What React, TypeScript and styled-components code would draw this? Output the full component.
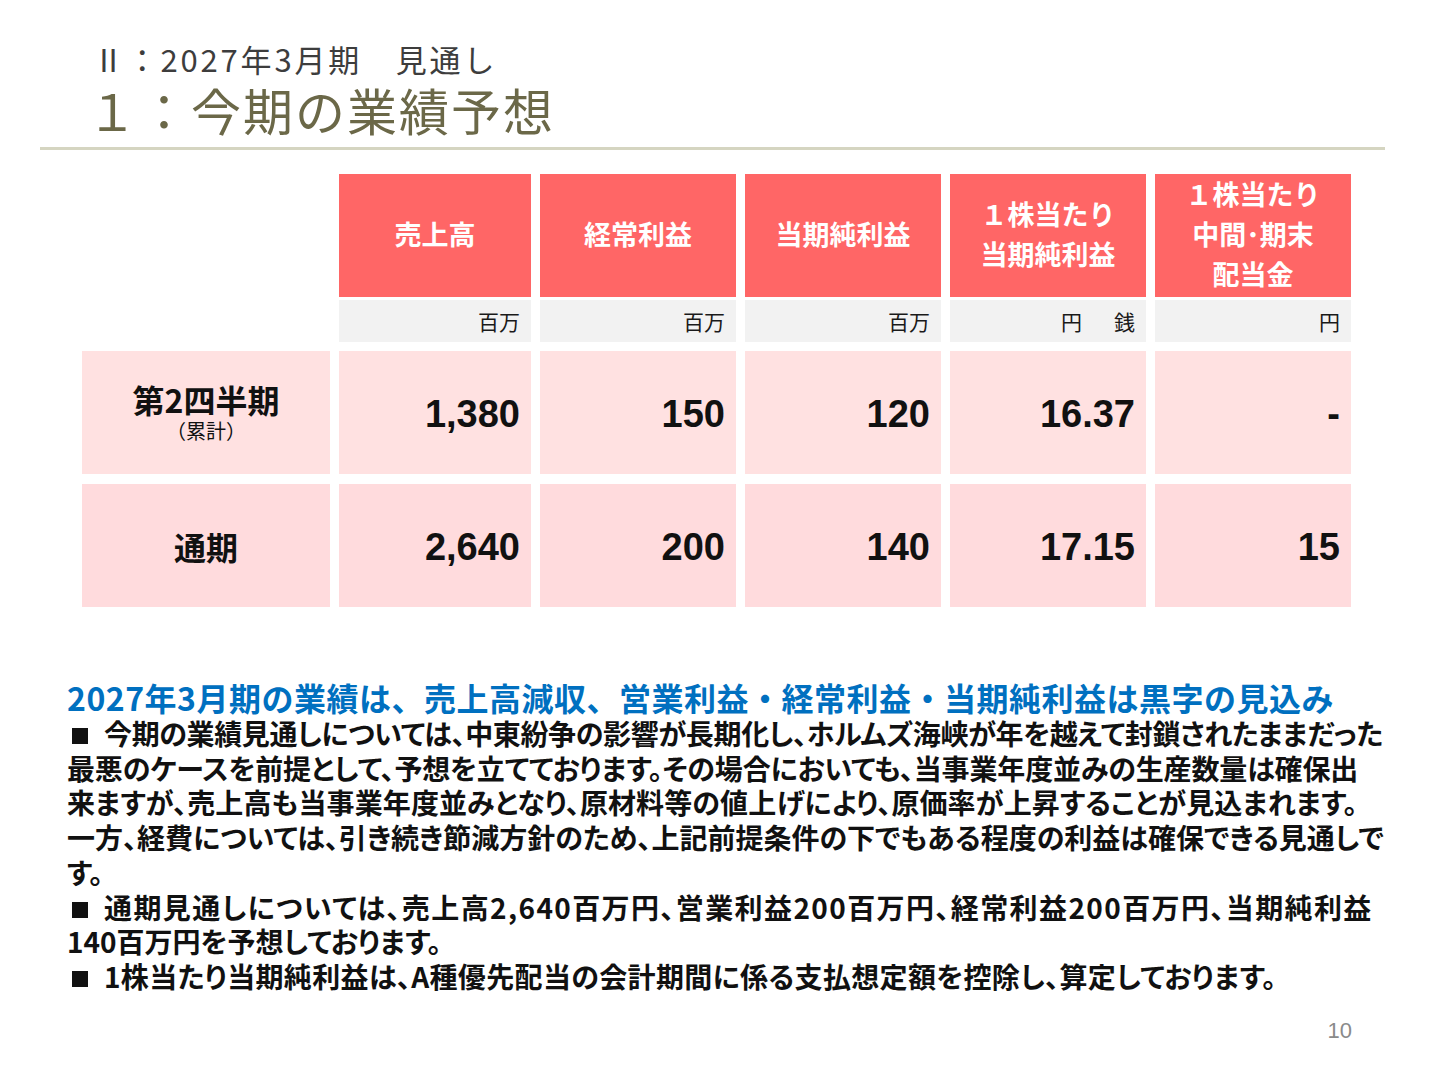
import React from "react";
import styled, { createGlobalStyle } from "styled-components";

const GlobalStyle = createGlobalStyle`
  html, body { margin: 0; padding: 0; background: #ffffff; }
  body { font-family: "Noto Sans CJK JP", "Noto Sans", sans-serif; }
`;

const Page = styled.div`
  width: 1440px;
  height: 1080px;
  box-sizing: border-box;
  padding-top: 41px;
  display: flex;
  flex-direction: column;
  overflow: hidden;
`;

const TitleBlock = styled.header`
  padding-left: 93px;
  display: flex;
  flex-direction: column;
  gap: 4px;
`;

const SubTitle = styled.div`
  font-size: 31px;
  line-height: 36px;
  font-weight: 400;
  letter-spacing: 2.8px;
  color: #3d3d3d;
  white-space: nowrap;
`;

const MainTitle = styled.h1`
  margin: 0 0 0 -6px;
  font-size: 50px;
  line-height: 56px;
  font-weight: 400;
  letter-spacing: 2px;
  color: #6b6848;
  white-space: nowrap;
`;

const Divider = styled.div`
  margin: 10px 55px 0 40px;
  height: 3px;
  background: #d5d5c1;
`;

const Table = styled.div`
  margin: 24px 0 0 82px;
  display: flex;
  flex-direction: column;
`;

const Row = styled.div<{ $h: number; $mt: number }>`
  display: grid;
  grid-template-columns: 248px 192px repeat(4, 196px);
  column-gap: 9px;
  height: ${(p) => p.$h}px;
  margin-top: ${(p) => p.$mt}px;
`;

const Blank = styled.div``;

const HeadCell = styled.div`
  background: #ff6666;
  color: #ffffff;
  font-weight: 700;
  font-size: 27px;
  line-height: 40px;
  display: flex;
  align-items: center;
  justify-content: center;
  text-align: center;
  padding-bottom: 3px;
  box-sizing: border-box;
`;

const UnitCell = styled.div`
  background: #f2f2f2;
  color: #1a1a1a;
  font-size: 21px;
  display: flex;
  align-items: center;
  justify-content: flex-end;
  gap: 32px;
  padding-right: 11px;
`;

const LabelCell = styled.div<{ $bg: string }>`
  background: ${(p) => p.$bg};
  display: flex;
  flex-direction: column;
  align-items: center;
  justify-content: center;
  color: #111111;
`;

const LabelMain = styled.div`
  font-size: 32px;
  font-weight: 700;
  line-height: 34px;
  font-feature-settings: "palt";
`;

const LabelSub = styled.div`
  font-size: 20px;
  line-height: 24px;
  margin-top: 3px;
`;

const ValueCell = styled.div<{ $bg: string }>`
  background: ${(p) => p.$bg};
  display: flex;
  align-items: center;
  justify-content: flex-end;
  padding-right: 11px;
  padding-top: 3px;
  font-family: "Liberation Sans", Arial, sans-serif;
  font-weight: 700;
  font-size: 38px;
  color: #111111;
`;

const Summary = styled.section`
  margin: 71px 0 0 67px;
  display: flex;
  flex-direction: column;
`;

const Headline = styled.h2`
  margin: 0;
  font-size: 32px;
  line-height: 38px;
  font-weight: 700;
  letter-spacing: 0.5px;
  color: #0070c0;
  white-space: nowrap;
`;

const BodyLine = styled.p<{ $track: number }>`
  margin: 0;
  font-size: 28px;
  line-height: 34.7px;
  font-weight: 700;
  color: #111111;
  white-space: nowrap;
  letter-spacing: ${(p) => p.$track}px;
  font-feature-settings: "palt";
`;

const Bullet = styled.span`
  display: inline-block;
  width: 16px;
  height: 16px;
  background: #111111;
  margin: 0 16px 0 5px;
  vertical-align: 1px;
`;

const Footer = styled.footer`
  margin-top: auto;
  padding: 0 88px 36px 0;
  display: flex;
  justify-content: flex-end;
`;

const PageNo = styled.span`
  font-family: "Liberation Sans", Arial, sans-serif;
  font-size: 22px;
  line-height: 26px;
  color: #8a8a8a;
`;

const headers: string[][] = [
  ["売上高"],
  ["経常利益"],
  ["当期純利益"],
  ["１株当たり", "当期純利益"],
  ["１株当たり", "中間･期末", "配当金"],
];

const units: string[][] = [["百万"], ["百万"], ["百万"], ["円", "銭"], ["円"]];

const rows = [
  { main: "第2四半期", sub: "（累計）", values: ["1,380", "150", "120", "16.37", "-"], bg: "#ffe1e1" },
  { main: "通期", sub: "", values: ["2,640", "200", "140", "17.15", "15"], bg: "#ffdbdd" },
];

const body: { bullet?: boolean; text: string; track: number }[] = [
  { bullet: true, track: -0.35, text: "今期の業績見通しについては、中東紛争の影響が長期化し、ホルムズ海峡が年を越えて封鎖されたままだった" },
  { track: -0.14, text: "最悪のケースを前提として、予想を立てております。その場合においても、当事業年度並みの生産数量は確保出" },
  { track: 0.1, text: "来ますが、売上高も当事業年度並みとなり、原材料等の値上げにより、原価率が上昇することが見込まれます。" },
  { track: 0, text: "一方、経費については、引き続き節減方針のため、上記前提条件の下でもある程度の利益は確保できる見通しで" },
  { track: 0, text: "す。" },
  { bullet: true, track: 1.4, text: "通期見通しについては、売上高2,640百万円、営業利益200百万円、経常利益200百万円、当期純利益" },
  { track: 0, text: "140百万円を予想しております。" },
  { bullet: true, track: 0.35, text: "1株当たり当期純利益は、A種優先配当の会計期間に係る支払想定額を控除し、算定しております。" },
];

export default function App() {
  return (
    <>
      <GlobalStyle />
      <Page>
        <TitleBlock>
          <SubTitle>Ⅱ：2027年3月期　見通し</SubTitle>
          <MainTitle>１：今期の業績予想</MainTitle>
        </TitleBlock>
        <Divider />
        <Table>
          <Row $h={122} $mt={0}>
            <Blank />
            {headers.map((lines, i) => (
              <HeadCell key={i}>
                <div>
                  {lines.map((l, j) => (
                    <div key={j}>{l}</div>
                  ))}
                </div>
              </HeadCell>
            ))}
          </Row>
          <Row $h={42} $mt={4}>
            <Blank />
            {units.map((u, i) => (
              <UnitCell key={i}>
                {u.map((t, j) => (
                  <span key={j}>{t}</span>
                ))}
              </UnitCell>
            ))}
          </Row>
          {rows.map((r, i) => (
            <Row key={i} $h={123} $mt={i === 0 ? 9 : 10}>
              <LabelCell $bg={r.bg}>
                <LabelMain>{r.main}</LabelMain>
                {r.sub && <LabelSub>{r.sub}</LabelSub>}
              </LabelCell>
              {r.values.map((v, j) => (
                <ValueCell key={j} $bg={r.bg}>
                  {v}
                </ValueCell>
              ))}
            </Row>
          ))}
        </Table>
        <Summary>
          <Headline>2027年3月期の業績は、売上高減収、営業利益・経常利益・当期純利益は黒字の見込み</Headline>
          {body.map((b, i) => (
            <BodyLine key={i} $track={b.track}>
              {b.bullet && <Bullet />}
              {b.text}
            </BodyLine>
          ))}
        </Summary>
        <Footer>
          <PageNo>10</PageNo>
        </Footer>
      </Page>
    </>
  );
}
